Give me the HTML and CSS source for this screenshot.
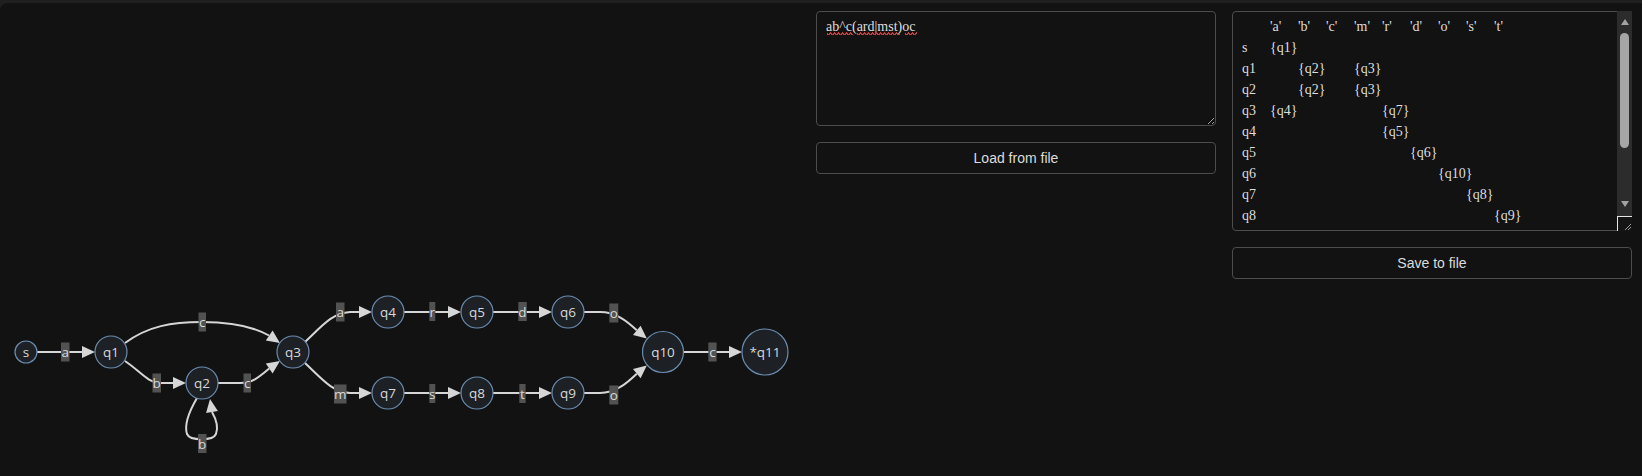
FILE: index.html
```html
<!DOCTYPE html>
<html lang="en">
<head>
<meta charset="utf-8">
<title>Regex to NFA</title>
<link rel="stylesheet" href="styles.css">
</head>
<body>
<div class="app">
  <div class="graph">
    <svg class="nfa" width="800" height="473" viewBox="0 3 800 473" xmlns="http://www.w3.org/2000/svg">
      <g class="edges">
        <path d="M37,352 L82,352"/>
        <path d="M125,343 C148,326 172,322 202,322 C232,322 254,327 269,335.5"/>
        <path d="M125,361 C140,371 148,383 160,383 L173,383"/>
        <path d="M218,383 L240,383 C252,383 258,378 269.2,368.5"/>
        <path d="M197,398 C190,410 184,425 187,434 C190,441 213,441 216,434 C219,426 216,419 212,412"/>
        <path d="M305,342 C322,326 332,313 350,312 L359,312"/>
        <path d="M305,363 C322,379 332,392 350,393 L359,393"/>
        <path d="M404,312 L448,312"/>
        <path d="M493,312 L539,312"/>
        <path d="M584,312 L600,312 C615,312 626,320 636.8,330.3"/>
        <path d="M404,393 L448,393"/>
        <path d="M493,393 L539,393"/>
        <path d="M584,393 L600,393 C615,393 626,384 636.8,373.7"/>
        <path d="M684,352 L729,352"/>
      </g>
      <g class="arrows">
        <polygon points="95,352 82,346 82,358"/>
        <polygon points="279.9,342.9 265.8,340.4 272.6,330.6"/>
        <polygon points="186,383 173,377 173,389"/>
        <polygon points="279.9,361.1 272.6,373.4 265.8,363.6"/>
        <polygon points="210,399 217.9,411.1 206.1,412.9"/>
        <polygon points="372,312 359,306 359,318"/>
        <polygon points="372,393 359,387 359,399"/>
        <polygon points="461,312 448,306 448,318"/>
        <polygon points="552,312 539,306 539,318"/>
        <polygon points="646.8,338.6 633,334.9 640.6,325.7"/>
        <polygon points="461,393 448,387 448,399"/>
        <polygon points="552,393 539,387 539,399"/>
        <polygon points="646.8,365.4 640.6,378.3 633,369.1"/>
        <polygon points="742,352 729,346 729,358"/>
      </g>
      <g class="labels">
        <rect x="61" y="342.5" width="8.5" height="19"/><text x="65.2" y="357">a</text>
        <rect x="198.5" y="312.5" width="7.5" height="19"/><text x="202.2" y="327">c</text>
        <rect x="152.5" y="373.5" width="8.5" height="19"/><text x="156.7" y="388">b</text>
        <rect x="243.5" y="373.5" width="7.5" height="19"/><text x="247.2" y="388">c</text>
        <rect x="198" y="434" width="8.5" height="19"/><text x="202.2" y="448.5">b</text>
        <rect x="336" y="302.5" width="8.5" height="19"/><text x="340.2" y="317">a</text>
        <rect x="334" y="384.5" width="12.5" height="19"/><text x="340.2" y="399">m</text>
        <rect x="429.3" y="302" width="6" height="19"/><text x="432.3" y="316.5">r</text>
        <rect x="518.3" y="302" width="8.5" height="19"/><text x="522.5" y="316.5">d</text>
        <rect x="609.3" y="303.5" width="9" height="19"/><text x="613.8" y="318">o</text>
        <rect x="429.3" y="384" width="6" height="19"/><text x="432.3" y="398.5">s</text>
        <rect x="519.3" y="384" width="6.3" height="19"/><text x="522.4" y="398.5">t</text>
        <rect x="609.3" y="385.5" width="9" height="19"/><text x="613.8" y="400">o</text>
        <rect x="708.3" y="342.5" width="8.3" height="19"/><text x="712.4" y="357">c</text>
      </g>
      <g class="nodes">
        <circle cx="26" cy="352" r="11"/><text x="26" y="357">s</text>
        <circle cx="111" cy="352" r="16"/><text x="111" y="357">q1</text>
        <circle cx="202" cy="383" r="16"/><text x="202" y="388">q2</text>
        <circle cx="293" cy="352" r="16"/><text x="293" y="357">q3</text>
        <circle cx="388" cy="312" r="16"/><text x="388" y="317">q4</text>
        <circle cx="477" cy="312" r="16"/><text x="477" y="317">q5</text>
        <circle cx="568" cy="312" r="16"/><text x="568" y="317">q6</text>
        <circle cx="388" cy="393" r="16"/><text x="388" y="398">q7</text>
        <circle cx="477" cy="393" r="16"/><text x="477" y="398">q8</text>
        <circle cx="568" cy="393" r="16"/><text x="568" y="398">q9</text>
        <circle cx="663" cy="352" r="20.5"/><text x="663" y="357">q10</text>
        <circle cx="765" cy="352" r="23"/><text x="765" y="357">*q11</text>
      </g>
    </svg>
  </div>
  <div class="col">
    <div class="field">
      <textarea class="box regex" spellcheck="false">ab^c(ard|mst)oc</textarea>
      <span class="squiggle sq1" aria-hidden="true"></span>
      <span class="squiggle sq2" aria-hidden="true"></span>
      <span class="squiggle sq3" aria-hidden="true"></span>
    </div>
    <button class="btn" type="button">Load from file</button>
  </div>
  <div class="col">
    <div class="field table-field">
      <textarea class="box table" spellcheck="false">&#9;'a'&#9;'b'&#9;'c'&#9;'m'&#9;'r'&#9;'d'&#9;'o'&#9;'s'&#9;'t'
s&#9;{q1}
q1&#9;&#9;{q2}&#9;{q3}
q2&#9;&#9;{q2}&#9;{q3}
q3&#9;{q4}&#9;&#9;&#9;{q7}
q4&#9;&#9;&#9;&#9;&#9;{q5}
q5&#9;&#9;&#9;&#9;&#9;&#9;{q6}
q6&#9;&#9;&#9;&#9;&#9;&#9;&#9;{q10}
q7&#9;&#9;&#9;&#9;&#9;&#9;&#9;&#9;{q8}
q8&#9;&#9;&#9;&#9;&#9;&#9;&#9;&#9;&#9;{q9}
q9&#9;&#9;&#9;&#9;&#9;&#9;&#9;{q10}
q10&#9;&#9;&#9;{q11}
*q11
</textarea>
      <div class="scrollbar" aria-hidden="true">
        <span class="sb-up"></span>
        <span class="sb-thumb"></span>
        <span class="sb-space"></span>
        <span class="sb-down"></span>
        <span class="sb-corner">
          <svg width="14" height="14" viewBox="0 0 14 14"><path d="M13,7 L7,13 M13,10 L10,13" stroke="#9a9a9a" stroke-width="1" fill="none"/></svg>
        </span>
      </div>
    </div>
    <button class="btn" type="button">Save to file</button>
  </div>
</div>
</body>
</html>
```
FILE: styles.css
```css
html, body {
  margin: 0;
  padding: 0;
  height: 100%;
  background: #1f1f1f;
  color-scheme: dark;
  overflow: hidden;
}

.app {
  margin-top: 3px;
  height: 473px;
  background: #121212;
  border-top-left-radius: 8px;
  display: flex;
  align-items: flex-start;
  gap: 16px;
  padding-right: 10px;
}

.graph {
  flex: 0 0 800px;
  height: 473px;
}

.nfa {
  display: block;
}

.edges path {
  fill: none;
  stroke: #d6d6d6;
  stroke-width: 2;
}

.arrows polygon {
  fill: #d6d6d6;
}

.labels rect {
  fill: #525252;
}

.labels text,
.nodes text {
  font-family: "Open Sans", "Noto Sans", sans-serif;
  font-size: 13.5px;
  fill: #d8d8d8;
  text-anchor: middle;
}

.nodes circle {
  fill: #1d2125;
  stroke: #6a8cb0;
  stroke-width: 1.2;
}

.col {
  flex: 0 0 400px;
  width: 400px;
  padding-top: 8px;
  display: flex;
  flex-direction: column;
  gap: 16px;
}

.field {
  position: relative;
  width: 400px;
}

.box {
  display: block;
  box-sizing: border-box;
  width: 400px;
  margin: 0;
  padding: 4px 9px;
  border: 1px solid #4c4c4c;
  border-radius: 4px;
  background: #121212;
  color: #dedede;
  font-family: "Liberation Serif", "Times New Roman", serif;
  font-size: 14px;
  line-height: 21px;
  tab-size: 8;
  outline: none;
  white-space: pre;
}

.regex {
  height: 115px;
}

.squiggle {
  position: absolute;
  top: 21px;
  height: 3px;
  background-image:
    linear-gradient(135deg, transparent 40%, #d03a3a 40% 60%, transparent 60%),
    linear-gradient(45deg, transparent 40%, #d03a3a 40% 60%, transparent 60%);
  background-size: 4px 6px;
  background-position: 0 0, 0 0;
  background-repeat: repeat-x;
}

.sq1 { left: 11px; width: 26px; }
.sq2 { left: 41px; width: 43px; }
.sq3 { left: 89px; width: 12px; }

.table {
  height: 220px;
  overflow: hidden;
  resize: none;
  scrollbar-width: none;
}

.scrollbar {
  position: absolute;
  top: 0;
  right: 0;
  width: 15px;
  height: 220px;
  background: #2c2c2c;
  display: flex;
  flex-direction: column;
  align-items: center;
  padding-top: 8px;
  box-sizing: border-box;
}

.sb-up {
  width: 0;
  height: 0;
  border-left: 4.5px solid transparent;
  border-right: 4.5px solid transparent;
  border-bottom: 6px solid #a3a3a3;
}

.sb-thumb {
  margin-top: 8px;
  width: 9px;
  height: 115px;
  border-radius: 5px;
  background: #a6a6a6;
}

.sb-space {
  flex: 1;
}

.sb-down {
  width: 0;
  height: 0;
  border-left: 4.5px solid transparent;
  border-right: 4.5px solid transparent;
  border-top: 6px solid #a3a3a3;
  margin-bottom: 9px;
}

.sb-corner {
  align-self: stretch;
  box-sizing: border-box;
  height: 15px;
  border-top: 1px solid #e6e6e6;
  border-left: 1px solid #e6e6e6;
  background: #151515;
  display: flex;
}

.sb-corner svg {
  display: block;
}

.btn {
  box-sizing: border-box;
  width: 400px;
  height: 32px;
  margin: 0;
  padding: 0;
  border: 1px solid #4c4c4c;
  border-radius: 4px;
  background: #121212;
  color: #dcdcdc;
  font-family: "Liberation Sans", Arial, sans-serif;
  font-size: 14px;
}
```
